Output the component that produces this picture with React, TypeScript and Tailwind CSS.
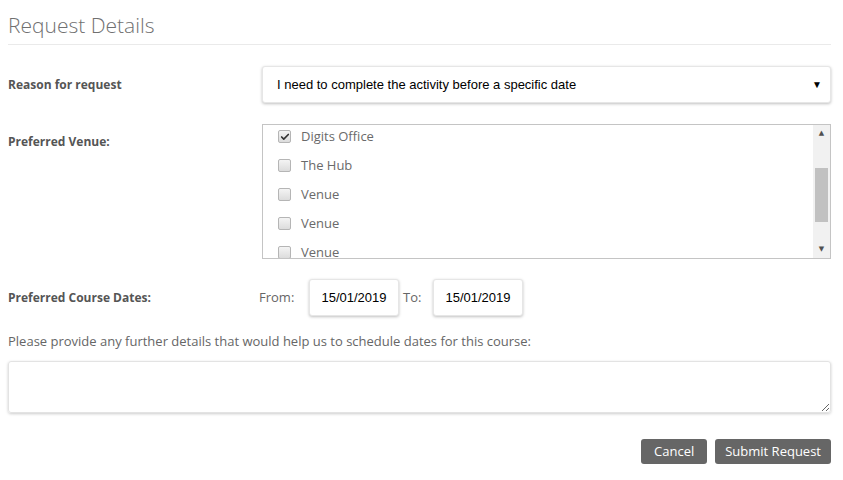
import { Check } from 'lucide-react';

const venues = [
  { name: 'Digits Office', checked: true },
  { name: 'The Hub', checked: false },
  { name: 'Venue', checked: false },
  { name: 'Venue', checked: false },
  { name: 'Venue', checked: false },
];

const font = { fontFamily: '"Open Sans", "DejaVu Sans", sans-serif' };

function DateBox({ value }: { value: string }) {
  return (
    <div className="w-[90px] h-[37px] bg-white rounded-[3px] border border-[#e6e6e6] shadow-[0_1px_3px_rgba(0,0,0,0.25)] flex items-center justify-center text-[13px] text-black font-['Liberation_Sans',Arial,sans-serif]">
      {value}
    </div>
  );
}

export default function App() {
  return (
    <div className="w-[843px] h-[480px] bg-white pl-2 pr-3 pt-[11px] text-[#666]" style={font}>
      {/* Heading */}
      <h1 className="text-[21px] font-light text-[#707070] leading-[28px] pb-[5px] border-b border-[#eaeaea]">
        Request Details
      </h1>

      {/* Reason */}
      <div className="flex items-center mt-[21px]">
        <label className="w-[254px] text-[12px] font-bold text-[#555]">Reason for request</label>
        <div className="flex-1 h-[37px] bg-white rounded-[3px] border border-[#e6e6e6] shadow-[0_1px_3px_rgba(0,0,0,0.25)] flex items-center justify-between pl-[14px] pr-[8px] font-['Liberation_Sans',Arial,sans-serif] text-[13px] text-black">
          <span>I need to complete the activity before a specific date</span>
          <span className="text-[10px]">▼</span>
        </div>
      </div>

      {/* Venue */}
      <div className="flex mt-[21px]">
        <label className="w-[254px] text-[12px] font-bold text-[#555] pt-[9px]">Preferred Venue:</label>
        <div className="flex-1 h-[135px] border border-[#c4c4c4] flex bg-white">
          <div className="flex-1 overflow-hidden pl-[15px]">
            <div className="flex flex-col gap-[12px] mt-[3px]">
              {venues.map((v, i) => (
                <div key={i} className="flex items-center h-[17px] text-[13px] text-[#6a6a6a]">
                  <span className="w-[13px] h-[13px] rounded-[2px] border border-[#b5b5b5] bg-gradient-to-b from-[#f4f4f4] to-[#dcdcdc] flex items-center justify-center mr-[10px]">
                    {v.checked && <Check className="w-[10px] h-[10px] text-[#333]" strokeWidth={4} />}
                  </span>
                  {v.name}
                </div>
              ))}
            </div>
          </div>
          {/* scrollbar */}
          <div className="w-[17px] bg-[#f1f1f1] flex flex-col items-center">
            <div className="h-[17px] flex items-center justify-center text-[#505050] text-[7px]">▲</div>
            <div className="h-[26px]" />
            <div className="w-[13px] h-[54px] bg-[#c1c1c1]" />
            <div className="flex-1" />
            <div className="h-[17px] flex items-center justify-center text-[#505050] text-[7px]">▼</div>
          </div>
        </div>
      </div>

      {/* Dates */}
      <div className="flex items-center mt-[20px]">
        <label className="w-[251px] text-[12px] font-bold text-[#555]">Preferred Course Dates:</label>
        <span className="text-[13px] w-[50px]">From:</span>
        <DateBox value="15/01/2019" />
        <span className="text-[13px] ml-[4px] w-[30px]">To:</span>
        <DateBox value="15/01/2019" />
      </div>

      <p className="text-[13px] mt-[16px] leading-[18px]">
        Please provide any further details that would help us to schedule dates for this course:
      </p>

      <textarea className="block w-full h-[52px] mt-[11px] border border-[#e3e3e3] rounded-[3px] shadow-[0_1px_3px_rgba(0,0,0,0.2)] resize-y" />

      <div className="flex justify-end gap-[8px] mt-[26px]">
        <button className="h-[25px] px-[13px] bg-[#666] text-white text-[13px] rounded-[3px]">Cancel</button>
        <button className="h-[25px] px-[10px] bg-[#666] text-white text-[13px] rounded-[3px]">Submit Request</button>
      </div>
    </div>
  );
}
